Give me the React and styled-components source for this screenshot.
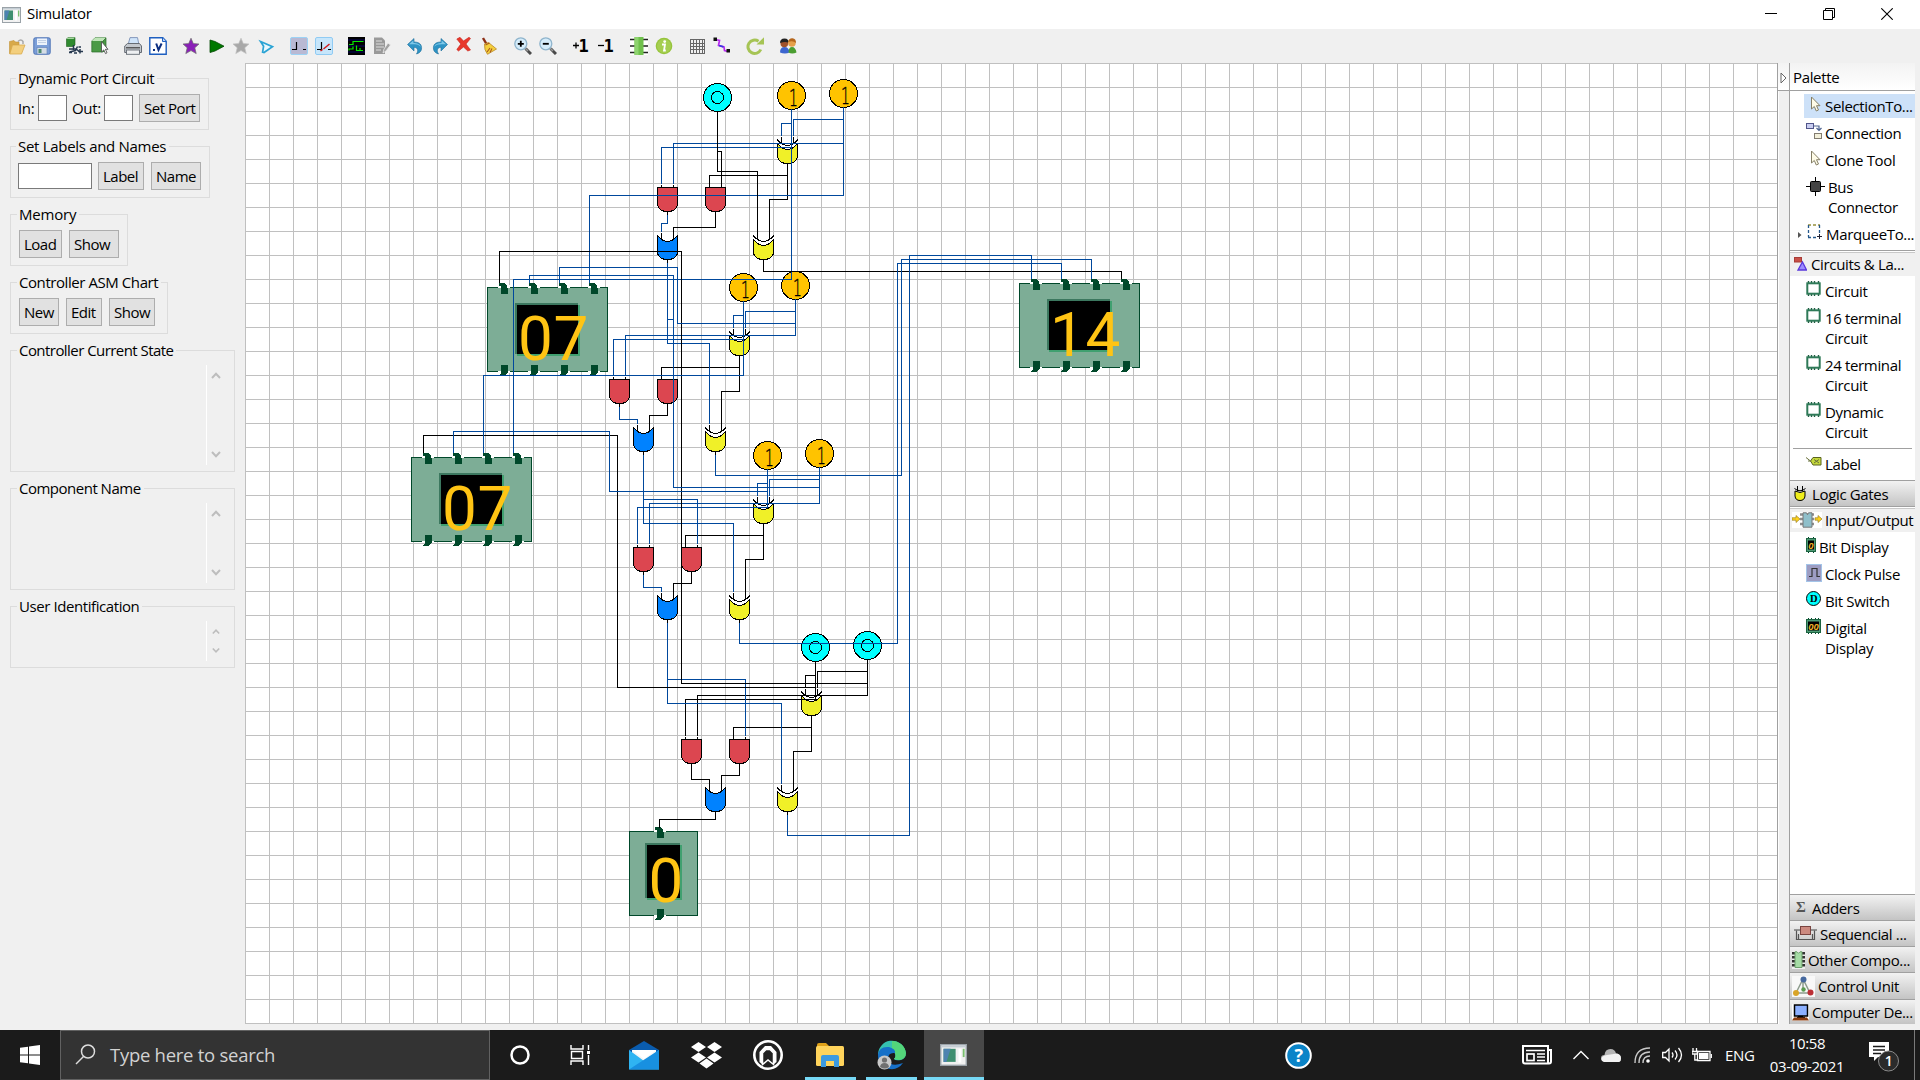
import React from "react";
import styled, { createGlobalStyle, css } from "styled-components";

const Global = createGlobalStyle`
  * { box-sizing: border-box; }
  html, body { margin: 0; padding: 0; overflow: hidden; }
  body {
    width: 1920px; height: 1080px; background: #f0f0f0; color: #000;
    font-family: "Open Sans", "Noto Sans", sans-serif; font-size: 15px; letter-spacing: -0.35px;
  }
  svg { display: block; flex: none; }
`;

const Screen = styled.div`
  width: 1920px; height: 1080px; display: flex; flex-direction: column; overflow: hidden;
`;

/* ---------- title bar ---------- */
const TitleBar = styled.header`
  height: 29px; flex: none; background: #fff; display: flex; align-items: center; padding-left: 2px;
`;
const TitleText = styled.div`
  flex: 1; padding: 0 0 2px 6px; line-height: 27px;
`;
const WindowButtons = styled.div`
  display: flex; gap: 46px; padding: 0 27px 1px 0;
`;

/* ---------- toolbar ---------- */
const ToolBar = styled.div`
  height: 34px; flex: none; display: flex; align-items: center; gap: 15px; padding-left: 8px;
`;
const ToolGroup = styled.div`
  display: flex; gap: 7px;
`;
const ToolButton = styled.div`
  width: 18px; height: 18px;
`;

/* ---------- body ---------- */
const Body = styled.div`
  height: 967px; flex: none; display: flex; padding-bottom: 6px;
`;
const Sidebar = styled.aside`
  width: 245px; flex: none; padding: 5px 0 0 10px; display: flex; flex-direction: column; gap: 6px;
`;
const Group = styled.fieldset`
  width: ${(p) => p.$w}px; height: ${(p) => p.$h || 62}px; min-width: 0; margin: 0;
  border: 1px solid #dcdcdc; padding: ${(p) => p.$pad || "6px 0 0 8px"};
`;
const Legend = styled.legend`
  margin-left: ${(p) => (p.$flush ? 6 : -2)}px; padding: 0 3px 0 2px; height: 20px; line-height: 21px;
  white-space: nowrap; letter-spacing: ${(p) => p.$ls || 0}px;
`;
const Row = styled.div`
  display: flex; align-items: center; height: 28px;
`;
const FieldLabel = styled.span`
  width: ${(p) => p.$w}px; padding-left: ${(p) => p.$pl || 0}px; line-height: 28px;
`;
const Field = styled.div`
  width: ${(p) => p.$w}px; height: 26px; background: #fff; border: 1px solid #7a7a7a;
  margin-right: ${(p) => p.$mr || 0}px;
`;
const Button = styled.div`
  width: ${(p) => p.$w}px; height: 28px; background: #e1e1e1; border: 1px solid #adadad;
  padding-left: 4px; margin-right: ${(p) => p.$mr || 0}px; line-height: 27px; white-space: nowrap;
  letter-spacing: -0.5px;
`;
const ScrollPane = styled.div`
  height: ${(p) => p.$h}px; margin: 5px 9px 0 195px; border-left: 1px solid #fff;
  display: flex; flex-direction: column; justify-content: space-between; align-items: center;
  padding: 7px 0;
`;

/* ---------- canvas ---------- */
const Canvas = styled.main`
  width: 1532px; flex: none; background-color: #fff;
  background-image: linear-gradient(to right, #c0c0c0 1px, transparent 1px),
    linear-gradient(to bottom, #c0c0c0 1px, transparent 1px);
  background-size: 24px 24px;
`;

/* ---------- palette ---------- */
const PaletteWrap = styled.section`
  width: 138px; flex: none; display: flex; flex-direction: column; border-left: 1px solid #a0a0a0;
`;
const PaletteHead = styled.div`
  height: 28px; flex: none; display: flex; border-bottom: 1px solid #a0a0a0;
  background: linear-gradient(#f3f3f3, #fff);
`;
const HeadToggle = styled.div`
  width: 12px; border-right: 1px solid #a0a0a0; padding: 9px 0 0 2px;
`;
const HeadText = styled.div`
  padding-left: 3px; line-height: 29px;
`;
const PaletteMain = styled.div`
  flex: 1; display: flex; min-height: 0;
`;
const Gutter = styled.div`
  width: 12px; flex: none; background: #f0f0f0; border-right: 1px solid #a0a0a0; border-left: 1px solid #fff;
`;
const Drawers = styled.div`
  width: 125px; background: #fff; display: flex; flex-direction: column; padding-top: 2px;
`;
const Tool = styled.div`
  flex: none; min-height: 27px; display: flex; padding: 3px 0 4px ${(p) => (p.$arrow ? 7 : 16)}px;
  line-height: 20px; white-space: pre; letter-spacing: -0.35px;
  ${(p) => p.$selected && css`
    background: linear-gradient(#cde1f8, #cde1f8) 14px 1px / 111px 24px no-repeat;
  `}
`;
const ToolIcon = styled.div`
  width: ${(p) => p.$w || 16}px; margin-right: ${(p) => p.$gap ?? 3}px; flex: none;
  padding-top: ${(p) => p.$top || 0}px;
`;
const OpenHeader = styled.div`
  flex: none; height: 26px; border-top: 1px solid #a0a0a0; background: #f0f0f0; display: flex;
  align-items: center; padding: 1px 0 0 ${(p) => p.$pl}px; margin: ${(p) => p.$m}; gap: ${(p) => p.$gap}px;
  box-shadow: inset 0 1px 0 #fff, inset 0 2px 0 #c8c8c8; white-space: nowrap;
`;
const Rule = styled.div`
  flex: none; height: 1px; background: #a0a0a0; margin: 2px 3px 2px;
`;
const Drawer = styled.div`
  flex: none; height: ${(p) => p.$h || 26}px; border-top: 1px solid #a0a0a0; display: flex; align-items: center;
  background: linear-gradient(#f2f2f2, #c4c4c4); padding-left: ${(p) => p.$pl}px; gap: ${(p) => p.$gap}px;
  white-space: nowrap; margin-top: ${(p) => p.$mt || 0}px;
`;
const Spacer = styled.div`
  flex: 1;
`;

/* ---------- taskbar ---------- */
const Taskbar = styled.footer`
  height: 50px; flex: none; background: #1b1b1b; color: #fff; display: flex;
`;
const StartButton = styled.div`
  width: 60px; display: flex; align-items: center; justify-content: center;
`;
const SearchBox = styled.div`
  width: 430px; background: #333; border: 1px solid #616161; display: flex; align-items: center;
  padding: 0 0 2px 14px; gap: 14px; font-size: 18.5px; color: #d2d2d2; letter-spacing: -0.27px;
`;
const TaskItem = styled.div`
  width: ${(p) => p.$w || 62}px; display: flex; flex-direction: column; align-items: center; justify-content: center;
  background: ${(p) => (p.$active ? "#484848" : "transparent")};
  margin: 0 ${(p) => p.$mr || 0}px 0 ${(p) => p.$ml || 0}px; padding-right: ${(p) => p.$pr || 0}px;
  box-shadow: ${(p) => (p.$open ? "inset 0 -3px 0 #76d9f6" : "none")};
`;
const Help = styled.div`
  width: 27px; margin-left: 301px; display: flex; align-items: center;
`;
const Tray = styled.div`
  margin-left: auto; display: flex; align-items: center;
`;
const TrayItem = styled.div`
  width: ${(p) => p.$w}px; margin-right: ${(p) => p.$mr}px; padding-top: ${(p) => p.$pt || 0}px;
`;
const Clock = styled.div`
  width: 80px; margin-right: 22px; text-align: center; line-height: 23px; letter-spacing: -0.4px;
`;
const ShowDesktop = styled.div`
  width: 6px; height: 50px; border-left: 1px solid #7a7a7a;
`;

/* ---------- toolbar icons ---------- */
const I = ({ children, w = 18, h = 18, vb }) => (
  <svg width={w} height={h} viewBox={vb || `0 0 ${w} ${h}`}>{children}</svg>
);

const Star = ({ a, b }) => (
  <I><path d="M9 1.2 11.3 6.6 17 7 12.8 10.8 14.2 16.6 9 13.6 3.8 16.6 5.2 10.8 1 7 6.7 6.6Z" fill={a} stroke={b} strokeWidth=".7" /></I>
);
const Lens = ({ plus }) => (
  <I>
    <path d="M11.5 11.5 17 17" stroke="#4a4a4a" strokeWidth="3" />
    <path d="M11.5 11.5 14 14" stroke="#999" strokeWidth="1.5" />
    <circle cx="6.8" cy="6.8" r="6" fill="#d5ecfa" stroke="#8fb4cc" strokeWidth="1.3" />
    <path d={plus ? "M3.8 6.8h6M6.8 3.8v6" : "M3.8 6.8h6"} stroke="#000" strokeWidth="1.8" />
  </I>
);
const Turn = ({ flip }) => (
  <I>
    <g transform={flip ? "translate(18 0) scale(-1 1)" : undefined}>
      <path d="M1.500 7.500 8 1.500V5C14 5 16 8 15.500 12 15.200 14.500 13.500 16 10.500 17 12.500 14 12 10.500 8 10.300V14Z" fill="#2d93c4" stroke="#1b6d9b" strokeWidth=".6" />
      <path d="M3 7.300 7.400 3.500V6C11 6 14 7 15 10 13 7.500 10 7 3 7.300Z" fill="#7fc8e8" />
    </g>
  </I>
);
const StepOne = ({ sign }) => (
  <svg width="18" height="18" viewBox="0 0 18 18">
    <path d={sign === "+" ? "M1 8.500h6M4 5.500v6" : "M1 8.500h6"} stroke="#000" strokeWidth="1.300" />
    <text x="6.400" y="15" fontFamily="DejaVu Sans Mono" fontSize="17" fontWeight="700">1</text>
  </svg>
);

const OpenIcon = () => (
  <I>
    <path d="M1.500 4.500 6 3.500 7.500 5H11V8H5L2.500 16.500H1.500Z" fill="#d8a949" stroke="#c39235" strokeWidth=".6" />
    <path d="M4.500 8H17L13.500 17H1.800Z" fill="#f3cf7e" stroke="#d9ab4d" strokeWidth=".8" />
    <path d="M10 4.500Q13 1.500 15 4.500V7" fill="none" stroke="#a9a9a9" strokeWidth="1.500" />
  </I>
);
const SaveIcon = () => (
  <I>
    <rect x=".8" y=".8" width="16.400" height="16.400" rx="1.500" fill="#7c9fd8" stroke="#4d73b5" />
    <rect x="4" y="1.500" width="10" height="6.500" fill="#edf3fb" />
    <path d="M5 3.500h8M5 5.500h8" stroke="#b8c8e0" strokeWidth=".8" />
    <rect x="4" y="10.500" width="10" height="6.500" fill="#d5dde6" stroke="#5f80b8" strokeWidth=".6" />
    <rect x="5.500" y="12" width="3" height="4" fill="#4d8a6d" />
  </I>
);
const RouteIcon = () => (
  <I>
    <path d="M.5 2 2 .5h7V8L7.500 9.500H.5Z" fill="#2f8a2f" stroke="#1d5c1d" strokeWidth=".6" />
    <path d="M.5 2 2 .5h7L7.500 2Z" fill="#a6d6a0" />
    <path d="M7.500 8v5M3 12h8M11.500 9.500l-2 4-6 1.500M8 16h3M11 12.500l2 2h4M14 12v4.500M12.500 10h2.500M3 15.500h3" fill="none" stroke="#26384f" strokeWidth="1.500" />
  </I>
);
const BlockCursorIcon = () => (
  <I>
    <path d="M.8 4 4 .8h11V12l-3 3H.8Z" fill="#4a9a45" stroke="#2a6a28" strokeWidth=".7" />
    <path d="M.8 4 4 .8h11L12 4Z" fill="#bfe5b8" />
    <path d="M12 4v11M12 4l3-3" stroke="#2a6a28" strokeWidth=".7" />
    <path d="M10.500 4.500V15l2.300-2.100 1.700 3.700 1.500-.8-1.600-3.500H17Z" fill="#fff" stroke="#555" strokeWidth=".9" />
  </I>
);
const PrintIcon = () => (
  <I>
    <path d="M4 8 6 .6h7.500L15 8Z" fill="#cfe4fa" stroke="#7c90b5" strokeWidth=".9" />
    <path d="M.7 9 3.500 6.500h12L17.500 9v6.500H.7Z" fill="#c3c8ce" stroke="#666c74" strokeWidth="1" />
    <rect x="2.500" y="13" width="13" height="4.300" fill="#eef0f2" stroke="#666c74" strokeWidth=".9" />
    <path d="M2 10.800h14" stroke="#333" strokeWidth="1.100" />
  </I>
);
const VerilogIcon = () => (
  <I>
    <path d="M.8.8h13l3.400 3.400v13H.8Z" fill="#fff" stroke="#1e5fc0" strokeWidth="1.400" />
    <path d="M13.500.8v3.700h3.700" fill="#bcd4f7" stroke="#1e5fc0" />
    <path d="M4 13h2M7.200 6.500 9.500 13 12.600 6.500" fill="none" stroke="#0b2e80" strokeWidth="2" />
  </I>
);

const GROUPS = [
  [<OpenIcon />, <SaveIcon />],
  [<RouteIcon />, <BlockCursorIcon />],
  [<PrintIcon />, <VerilogIcon />],
  [
    <Star a="#8a1fb8" b="#6d6d6d" />,
    <I><path d="M3 3 8 4.500 17 9.200 8 14 3 15.500Z" fill="#007800" stroke="#044a04" strokeWidth=".8" /></I>,
    <Star a="#a8a8a8" b="#c2c2c2" />,
    <I><path d="M3.600 4.500 15.500 9.600 7 15.500 5.600 15.200 6.600 9.200Z" fill="#e9f7fd" stroke="#2aa3d4" strokeWidth="1.700" /></I>,
  ],
  [
    <I><rect x=".5" y=".5" width="17" height="17" rx="1.500" fill="#b9b9d3" stroke="#9cd2f5" /><path d="M2 12.500h4.500V5M13 12.500h3" fill="none" stroke="#000" strokeWidth="1.200" /></I>,
    <I><rect x=".5" y=".5" width="17" height="17" rx="1.500" fill="#c7e6fb" stroke="#90cbf3" /><path d="M2 12.500h4.500V5M13 12.500h3" fill="none" stroke="#000" strokeWidth="1.200" /><path d="m5.500 14 2-1.500M8.500 12l6-5" stroke="#d51c1c" strokeWidth="1.500" /></I>,
  ],
  [
    <I><rect width="17" height="18" fill="#000" /><path d="M0 3h17M0 9h17M0 15h17" stroke="#050560" strokeWidth="1" /><path d="M1 7.500h4V4.500h10.500M1 13.500V12h4V9.500M8.500 8.500v5h3M12 11v2.500h3" fill="none" stroke="#08e800" strokeWidth="1.200" /></I>,
    <I><path d="M1 .5h8l3 3V17H1Z" fill="#999" /><path d="M3 4h6M3 7h8M3 10h8M3 13h5" stroke="#dedede" strokeWidth="1.200" /><path d="m10 16 1-4 4-6 2.500 2-4.500 6Z" fill="#a2a2a2" stroke="#eee" strokeWidth=".8" /></I>,
  ],
  [
    <Turn />,
    <Turn flip />,
    <I><path d="M.8 2 4 .3 7.500 4 13 .3 14.500 1.500 10 7 14.500 13 11.800 14 7.500 10 2.500 14 .8 12.500 4.800 7Z" fill="#e8382c" stroke="#c7221a" strokeWidth=".6" /></I>,
    <I><path d="m2 1 3.500 6" stroke="#8c2f16" strokeWidth="2.400" /><path d="M3.500 7 7.500 5.500 15.500 12 6.500 17.300Q3 13 3.500 7Z" fill="#f4cf3c" stroke="#b9882a" strokeWidth=".8" /><path d="m4.500 8 4-2M6 15l3-4M9 15.500l2-4" stroke="#a8571c" strokeWidth="1.100" /></I>,
  ],
  [<Lens plus />, <Lens />],
  [<StepOne sign="+" />, <StepOne sign="-" />],
  [
    <I><rect width="18" height="18" fill="#fff" /><path d="M0 2.500h18M0 9h18M0 15.500h18" stroke="#222" strokeWidth="1.300" /><rect x="4.500" width="9" height="18" fill="#6fc04c" /><rect x="4.500" width="4" height="18" fill="#8ed36f" /></I>,
    <I><circle cx="9" cy="9" r="8.300" fill="#96c43c" /><circle cx="9" cy="9" r="7" fill="#a5ce50" /><circle cx="9.700" cy="4.600" r="1.400" fill="#fff" /><path d="M7 7.500h3L9 13.500h1.800" fill="none" stroke="#fff" strokeWidth="1.800" /></I>,
  ],
  [
    <I><path d="M2.500 2v15M5.500 2v15M8.500 2v15M11.500 2v15M14.500 2v15M16.500 2v15M2 2.500h15M2 6.500h15M2 9.500h15M2 12.500h15M2 16.500h15" stroke="#666" shapeRendering="crispEdges" /></I>,
    <I><path d="M2 2.500 6.500 3.500 5.500 8.500 11 10 11.500 13.500 15 14.500" fill="none" stroke="#b92bee" strokeWidth="1.700" /><path d="M6 8.500 10.500 9.800" stroke="#3b35e0" strokeWidth="1.800" /><rect x=".5" y=".5" width="3.500" height="3.500" fill="#111" /><rect x="13.500" y="12" width="3.500" height="3.500" fill="#111" /></I>,
  ],
  [<I><path d="M14.800 12.500A6.700 6.700 0 1 1 12.500 4.200" fill="none" stroke="#a6c455" strokeWidth="3" /><path d="M10.500 7.500h7.500V.3Z" fill="#a6c455" /></I>],
  [
    <I>
      <path d="M1 15.500Q1 10 5.500 10t5 5.500Q6 17.500 1 15.500" fill="#3d66d0" /><circle cx="5.300" cy="6.500" r="3.800" fill="#a0512a" /><path d="M1 6Q1 1.500 5.500 1.500T9.500 6Q7 4 1 6" fill="#222" />
      <path d="M9.500 15.500Q9.500 10 13 10t4.500 5.500Q13 17.300 9.500 15.500" fill="#4b9e31" /><circle cx="12.900" cy="6" r="3.800" fill="#e6a04a" /><path d="M9 5Q10 1 13.500 1.300T17 6Q14 3 9 5" fill="#b5661c" />
    </I>,
  ],
];

/* ---------- circuit ---------- */
const BLUE = "#00489c";
const BLACK = "#000";

const Gate = ({ type, x, y }) => (
  <g transform={`translate(${x} ${y})`} stroke="#000" strokeWidth="1">
    {type === "and" && (
      <>
        <path d="M-6 -3V0M6 -3V0M0 24V28" />
        <path d="M-10 0H10V17Q9 24 0 24T-10 17Z" fill="#dc4650" />
      </>
    )}
    {type === "or" && (
      <>
        <path d="M-10 0Q-5 6 0 6T10 0V17Q9 24 0 24T-10 17Z" fill="#0082ff" />
        <path d="M-6 -3V4M6 -3V4M0 24V27" />
      </>
    )}
    {type === "xor" && (
      <>
        <path d="M-10 0Q-5 6 0 6T10 0V5H-10Z" fill="#fff" stroke="none" />
        <path d="M-10 4Q-5 10 0 10T10 4V17Q9 24 0 24T-10 17Z" fill="#f0f028" />
        <path d="M-10.500 0Q-5 6 0 6T10.500 0" fill="none" />
        <path d="M-6 -3V4M6 -3V4M0 24V27" />
      </>
    )}
  </g>
);

const Switch = ({ x, y, on }) => (
  <g transform={`translate(${x} ${y})`}>
    <circle r="14" fill={on ? "#ffc300" : "#00ffff"} stroke="#000" />
    {on ? (
      <text transform="translate(-2.500 10) scale(.62 1)" fontFamily="DejaVu Sans" fontWeight="200" fontSize="22.500" stroke="#000" strokeWidth=".4">1</text>
    ) : (
      <circle r="6" fill="none" stroke="#000" />
    )}
  </g>
);

const Pin = ({ x, top, bottom }) => (
  <g>
    <rect x={x - 1} y={top - 2} width="12" height="4" fill="#fff" />
    <rect x={x - 1} y={bottom - 2} width="12" height="4" fill="#fff" />
    <path d={`M${x} ${top - 4}h5l3 3v8h-6v-8h-2z`} fill="#00482a" />
    <rect x={x + 2} y={top + 1} width="7" height="6" fill="#00482a" />
    <path d={`M${x + 2} ${bottom - 6}h7v7l-3 4h-6v-1l2 -2z`} fill="#00482a" />
  </g>
);

const Display = ({ x, y, w, value, pins, screen, text }) => (
  <g>
    <rect x={x + 0.5} y={y + 0.5} width={w - 1} height="84" fill="#7dad96" stroke="#00482a" />
    {pins.map((p) => (
      <g key={p}>
        <Pin x={x + p} top={y} bottom={y + 84} />
        <rect x={x + p - 1} y={y + 1} width="3" height="2" fill="#7dad96" />
        <rect x={x + p + 9} y={y + 1} width="2" height="2" fill="#7dad96" />
        <rect x={x + p - 1} y={y + 81} width="3" height="3" fill="#7dad96" />
        <rect x={x + p + 9} y={y + 81} width="2" height="3" fill="#7dad96" />
      </g>
    ))}
    <rect x={x + screen[0] - 2} y={y + screen[1] - 2} width={screen[2] + 2} height={screen[3] + 2} fill="#3c785f" />
    <rect x={x + screen[0]} y={y + screen[1]} width={screen[2] + 2} height={screen[3] + 2} fill="#40a070" />
    <rect x={x + screen[0]} y={y + screen[1]} width={screen[2]} height={screen[3]} fill="#000" />
    <text x={x + text[0]} y={y + text[1]} fontFamily="Roboto, sans-serif" fontSize="62" letterSpacing=".7" fill="#ffc414">{value}</text>
  </g>
);

const STAGES = [
  { dx: 0, dy: 0, or: 667.5, on: true },
  { dx: -48, dy: 192, or: 643.5, on: true },
  { dx: -24, dy: 360, or: 667.5, on: true },
  { dx: 24, dy: 552, or: 715.5, on: false },
];

const stageWires = ({ dx, dy, on }) => {
  const c = on ? BLUE : BLACK;
  return [
    [c, `M${791.5 + dx} ${109 + dy}V${147.5 + dy}H${661.5 + dx}V${184 + dy}`],
    [c, `M${791.5 + dx} ${123.5 + dy}H${781.5 + dx}V${136 + dy}`],
    [c, `M${843.5 + dx} ${107 + dy}V${143.5 + dy}H${673.5 + dx}V${184 + dy}`],
    [c, `M${843.5 + dx} ${119.5 + dy}H${793.5 + dx}V${136 + dy}`],
    [BLACK, `M${787.5 + dx} ${164 + dy}V${199.5 + dy}H${769.5 + dx}V${239 + dy}`],
    [BLACK, `M${787.5 + dx} ${175.5 + dy}H${709.5 + dx}V${187 + dy}`],
  ];
};

const WIRES = [
  ...STAGES.flatMap(stageWires),
  [BLUE, "M791.5 147V279.5H513.5V453"],
  [BLUE, "M843.5 143V195.5H589.5V283"],
  [BLACK, "M717.5 111V171.5H757.5V238"],
  [BLACK, "M717.5 151.5H721.5V187"],
  [BLUE, "M667.5 215V223.5H661.5V232"],
  [BLACK, "M715.5 212V227.5H673.5V239"],
  [BLUE, "M619.5 407V419.5H637.5V424"],
  [BLACK, "M667.5 404V415.5H649.5V431"],
  [BLUE, "M643.5 575V587.5H661.5V592"],
  [BLACK, "M691.5 572V583.5H673.5V599"],
  [BLACK, "M691.5 764V779.5H709.5V790"],
  [BLACK, "M739.5 764V775.5H721.5V790"],
  [BLUE, "M667.5 263V343.5H709.5V424"],
  [BLUE, "M667.5 319.5H673.5"],
  [BLUE, "M643.5 455V523.5H733.5V592"],
  [BLUE, "M643.5 499.5H697.5V544"],
  [BLUE, "M667.5 623V703.5H781.5V784"],
  [BLUE, "M667.5 679.5H745.5V736"],
  [BLACK, "M715.5 812V819.5H659.5V828"],
  [BLACK, "M499.5 283V251.5H681.5V683.5H867.5"],
  [BLUE, "M529.5 283V275.5H673.5V487.5H819.5"],
  [BLUE, "M559.5 283V267.5H677.5V323.5H795.5"],
  [BLACK, "M423.5 453V435.5H617.5V687.5H815.5"],
  [BLUE, "M453.5 453V431.5H609.5V491.5H767.5"],
  [BLUE, "M483.5 453V375.5H743.5V339"],
  [BLACK, "M763.5 260V271.5H1121.5V279"],
  [BLUE, "M715.5 455V475.5H901.5V259.5H1091.5V279"],
  [BLUE, "M739.5 623V643.5H897.5V263.5H1061.5V279"],
  [BLUE, "M787.5 815V835.5H909.5V255.5H1031.5V279"],
];

const WIDE = { w: 121, pins: [12, 42, 72, 102], screen: [30, 18, 61, 49], text: [31, 73] };

const Circuit = () => (
  <svg width="1532" height="961" viewBox="245 63 1532 961" shapeRendering="crispEdges" letterSpacing="0">
    {STAGES.map(({ dx, dy, or, on }) => (
      <g key={dy}>
        <Switch x={791.5 + dx} y={95.5 + dy} on={on} />
        <Switch x={843.5 + dx} y={93.5 + dy} on={on} />
        <Gate type="xor" x={787.5 + dx} y={139.5 + dy} />
        <Gate type="and" x={667.5 + dx} y={187.5 + dy} />
        <Gate type="and" x={715.5 + dx} y={187.5 + dy} />
        <Gate type="or" x={or} y={235.5 + dy} />
        <Gate type="xor" x={763.5 + dx} y={235.5 + dy} />
      </g>
    ))}
    <Switch x={717.5} y={97.5} />
    <Display x={487} y={287} value="07" {...WIDE} />
    <Display x={411} y={457} value="07" {...WIDE} />
    <Display x={1019} y={283} value="14" {...WIDE} />
    <Display x={629} y={831} w={69} value="0" pins={[26]} screen={[18, 14, 33, 53]} text={[19.5, 71]} />
    <g fill="none" strokeWidth="1">
      {WIRES.map(([c, d], i) => <path key={i} d={d} stroke={c} />)}
    </g>
  </svg>
);

/* ---------- palette icons ---------- */
const Cursor = () => (
  <I w={16} h={16}><path d="M5.500 1v12l2.800-2.500 2 4.500 2.200-1-2-4.300H14Z" fill="#fffce8" stroke="#857f66" /></I>
);
const Chip = () => (
  <I w={15} h={15}>
    <path d="M2.500 0v15M5.500 0v15M8.500 0v15M12.500 0v15" stroke="#1e5c40" strokeWidth="1.400" />
    <rect x="1.300" y="2.300" width="12.400" height="10.400" fill="#fff" stroke="#2f7a58" strokeWidth="2" />
  </I>
);
const Led = ({ w, value }) => (
  <svg width={w} height="16" viewBox={`0 0 ${w} 16`} letterSpacing="0">
    <path d={w > 12 ? "M2.500 0v16M5.500 0v16M9.500 0v16M12.500 0v16" : "M2.500 0v16M7.500 0v16"} stroke="#004b2c" />
    <rect x=".5" y="1.500" width={w - 1} height="13" fill="#4d9a74" stroke="#1d6442" />
    <rect x="2" y="3.500" width={w - 4} height="9" fill="#000" />
    <text x={w / 2} y="11.600" textAnchor="middle" fontFamily="Liberation Sans" fontStyle="italic" fontWeight="700" fontSize="9.500" fill="#f0b428">{value}</text>
  </svg>
);
const ScrollArrow = ({ down, small }) => (
  <svg width={small ? 8 : 10} height="7" viewBox="0 0 10 7">
    <path d={down ? "M1 1 5 5.200 9 1" : "M1 6 5 1.800 9 6"} fill="none" stroke="#bdbdbd" strokeWidth="2" />
  </svg>
);

const Palette = () => (
  <PaletteWrap>
    <PaletteHead>
      <HeadToggle><I w={7} h={12}><path d="M1 1v10l5-5Z" fill="#fff" stroke="#666" /></I></HeadToggle>
      <HeadText>Palette</HeadText>
    </PaletteHead>
    <PaletteMain>
      <Gutter />
      <Drawers>
        <Tool $selected><ToolIcon><Cursor /></ToolIcon>SelectionTo...</Tool>
        <Tool>
          <ToolIcon>
            <I w={16} h={16}>
              <rect x=".5" y=".5" width="7" height="5" fill="#c9cdf0" stroke="#50558a" />
              <path d="M8 3h5v4M10.500 5 13 7.500 15.500 5" fill="none" stroke="#4c6290" strokeWidth="1.200" />
              <rect x="8.500" y="10.500" width="7" height="5" fill="#f2efda" stroke="#827c70" />
            </I>
          </ToolIcon>
          Connection
        </Tool>
        <Tool><ToolIcon><Cursor /></ToolIcon>Clone Tool</Tool>
        <Tool>
          <ToolIcon $w={19}>
            <I w={19} h={20} vb="0 1 19 20"><path d="M9.500 0v20M0 10.500h19" stroke="#000" /><rect x="4.500" y="5.500" width="10" height="10" rx="1" fill="#444" stroke="#000" /></I>
          </ToolIcon>
          {"Bus\nConnector"}
        </Tool>
        <Tool $arrow>
          <ToolIcon $w={5} $gap={4} $top={7}><I w={5} h={8}><path d="M1 1v6l3.500-3Z" fill="#555" /></I></ToolIcon>
          <ToolIcon $w={16} $gap={4}>
            <I w={16} h={15} vb="-1 0 16 15">
              <path d="M1 1h12" stroke="#96903c" strokeDasharray="3 2" strokeWidth="1.500" />
              <path d="M1.500 1v12M12.500 1v9M1 13.500h9" fill="none" stroke="#25588c" strokeDasharray="3 2" strokeWidth="1.300" />
              <path d="M12.500 10v5M10 12.500h5" stroke="#223" />
            </I>
          </ToolIcon>
          MarqueeTo...
        </Tool>
        <OpenHeader $pl={4} $gap={4} $m="2px 0 2px">
          <I w={13} h={14}><rect x=".5" y=".5" width="7" height="4.500" fill="#c85048" stroke="#a83c36" /><path d="M8.500 5 12.500 13h-8.500Z" fill="#9c8cff" stroke="#5a38dc" strokeWidth="1.300" /></I>
          Circuits &amp; La...
        </OpenHeader>
        <Tool><ToolIcon><Chip /></ToolIcon>Circuit</Tool>
        <Tool><ToolIcon><Chip /></ToolIcon>{"16 terminal\nCircuit"}</Tool>
        <Tool><ToolIcon><Chip /></ToolIcon>{"24 terminal\nCircuit"}</Tool>
        <Tool><ToolIcon><Chip /></ToolIcon>{"Dynamic\nCircuit"}</Tool>
        <Rule />
        <Tool>
          <ToolIcon $top={2}>
            <I w={16} h={10}><path d="M4.500 5 7 1.500h8V9H7Z" fill="#c5d83c" stroke="#5a6420" /><path d="M0 1.500 4.500 5H2M8 3.500l5 3.500M13 3.500 8 7" fill="none" stroke="#67703a" /></I>
          </ToolIcon>
          Label
        </Tool>
        <Drawer $pl={4} $gap={6} $mt={2}>
          <I w={12} h={16}><path d="M1 5Q6 8 11 5V10Q10.500 14.500 6 14.500T1 10Z" fill="#f0ee1c" stroke="#000" /><path d="M.5 2.500Q6 7 11.500 2.500M3.500 0v5M8.500 0v5" fill="none" stroke="#000" /></I>
          Logic Gates
        </Drawer>
        <OpenHeader $pl={2} $gap={3} $m="0 0 2px">
          <I w={30} h={16}>
            <rect width="30" height="16" fill="#fff" />
            <path d="M8 2.500h14M8 7h14M8 12h14" stroke="#8d8d8d" strokeWidth="2.500" />
            <path d="M11 .8h3.500l1 2 1-2H20V15.200H11Z" fill="#8fbfca" stroke="#777" />
            <path d="M0 5.800h4V3.500L8 7 4 10.500V8.200H0ZM23 5.800h3V3.500L30 7 26 10.500V8.200h-3Z" fill="#ffd21c" stroke="#9a8128" strokeWidth=".7" />
          </I>
          Input/Output
        </OpenHeader>
        <Tool><ToolIcon $w={10}><Led w={10} value="0" /></ToolIcon>Bit Display</Tool>
        <Tool>
          <ToolIcon><I w={16} h={18}><rect x=".5" y=".5" width="15" height="17" fill="#9c9cc2" stroke="#a3c4e8" /><path d="M3 12.500h3v-8h5v8h3" fill="none" stroke="#333" strokeWidth="1.200" /></I></ToolIcon>
          Clock Pulse
        </Tool>
        <Tool>
          <ToolIcon>
            <svg width="15" height="15" viewBox="0 0 15 15"><circle cx="7.500" cy="7.500" r="7" fill="#0ff" stroke="#000" /><text x="7.700" y="11" textAnchor="middle" fontFamily="Liberation Serif" fontWeight="700" fontSize="10.500">D</text></svg>
          </ToolIcon>
          Bit Switch
        </Tool>
        <Tool><ToolIcon><Led w={15} value="00" /></ToolIcon>{"Digital\nDisplay"}</Tool>
        <Spacer />
        <Drawer $pl={6} $gap={6}>
          <svg width="10" height="20" viewBox="0 0 10 20"><text x="0" y="14" fontFamily="Liberation Serif" fontWeight="700" fontSize="15" fill="#555">Σ</text></svg>
          Adders
        </Drawer>
        <Drawer $pl={4} $gap={3}>
          <I w={23} h={15}><path d="M0 4h23" stroke="#444" /><path d="M2.500 4.500v9h18v-9M4.500 8v5M18.500 8v5" fill="none" stroke="#555" strokeWidth="1.200" /><rect x="6.500" y=".5" width="10" height="8" fill="#cc8a80" stroke="#7a4440" /></I>
          Sequencial ...
        </Drawer>
        <Drawer $pl={2} $gap={3}>
          <I w={13} h={18}><rect width="13" height="18" fill="#eee" /><path d="M1.500 1v16M11.500 1v16" stroke="#333" strokeWidth="3" strokeDasharray="2.500 1.500" /><path d="M3 .8h2l1.500 1.500L8 .8h2V16.500H3Z" fill="#a5dca5" stroke="#6da06d" /></I>
          Other Compo...
        </Drawer>
        <Drawer $h={27} $pl={2} $gap={3}>
          <I w={23} h={21}><rect width="23" height="21" fill="#f8f8f8" /><path d="M11 3 4 17H18ZM11 3v10" fill="none" stroke="#8d9c8d" strokeWidth="1.500" /><circle cx="11.500" cy="3.500" r="3" fill="#46699f" /><circle cx="4" cy="17" r="3" fill="#d9a428" /><circle cx="18.500" cy="16.500" r="3" fill="#bb2f35" /><circle cx="11.500" cy="13.500" r="2.200" fill="#5b9c50" /></I>
          Control Unit
        </Drawer>
        <Drawer $h={25} $pl={2} $gap={3}>
          <I w={17} h={17}><rect width="17" height="17" fill="#fff" /><rect x="2.500" y="1" width="13" height="11" fill="#8cb0ff" stroke="#000" strokeWidth="1.500" /><path d="M6 12.500h5M5 13.500h8" stroke="#000" strokeWidth="1.500" /><path d="M0 16.500 2 13.500H15L17 16.500Z" fill="#8a3c10" /></I>
          Computer De...
        </Drawer>
      </Drawers>
    </PaletteMain>
  </PaletteWrap>
);

/* ---------- taskbar parts ---------- */
const AppIcon = ({ w, h }) => (
  <svg width={w} height={h} viewBox="0 0 19 16" preserveAspectRatio="none">
    <rect x=".5" y=".5" width="18" height="15" fill="#f1f1f1" stroke="#9aa2a8" />
    <rect x="1" y="1" width="17" height="1.500" fill="#c4cdd4" />
    <rect x="2.500" y="3.500" width="8.500" height="9.500" fill="#3f8f70" />
    <path d="M2.500 3.500h5l-3 9.500h-2Z" fill="#4d83b0" />
    <rect x="13" y="3.500" width="2" height="10" fill="#fff" />
    <rect x="16" y="3.500" width="1.300" height="6" fill="#7ac06f" />
  </svg>
);

const TaskbarView = () => (
  <Taskbar>
    <StartButton>
      <I w={20} h={20}><path d="M0 2.800 8 1.700V9.500H0ZM9 1.500 20 0V9.500H9ZM0 10.500H8V18.300L0 17.200ZM9 10.500H20V20L9 18.500Z" fill="#fff" /></I>
    </StartButton>
    <SearchBox>
      <I w={21} h={21}><circle cx="13" cy="7.500" r="6.500" fill="none" stroke="#ddd" strokeWidth="1.500" /><path d="M8.500 12.500 1 20" stroke="#ddd" strokeWidth="1.500" /></I>
      Type here to search
    </SearchBox>
    <TaskItem $w={60}><I w={20} h={20}><circle cx="10" cy="10" r="8.500" fill="none" stroke="#fff" strokeWidth="2.500" /></I></TaskItem>
    <TaskItem $w={60}>
      <I w={21} h={20}><path d="M1 0v4h12V0M1 20v-4h12v4M1.500 6.500h11v7h-11ZM18.500 0v5M18.500 10v10" fill="none" stroke="#fff" strokeWidth="1.400" /><rect x="17" y="6" width="3" height="3" fill="#fff" /></I>
    </TaskItem>
    <TaskItem $w={68}>
      <I w={30} h={29}><path d="M0 9 15 0 30 9V12H0Z" fill="#0a5cae" /><path d="M3 9H27V18L15 22 3 18Z" fill="#f6f6f6" /><path d="M0 9 15 20 30 9V28.500H0Z" fill="#2fb4f2" /><path d="M0 28.500 30 9V28.500Z" fill="#1890e0" /><path d="M3 9H27L15 18Z" fill="#fff" /></I>
    </TaskItem>
    <TaskItem $w={56}>
      <I w={31} h={27}><path d="M7.500 0 15 5 7.500 10 0 5ZM23.500 0 31 5 23.500 10 16 5ZM7.500 10.500 15 15.500 7.500 20.500 0 15.500ZM23.500 10.500 31 15.500 23.500 20.500 16 15.500ZM15.500 16.500 22.500 21.500 15.500 26.500 8.500 21.500Z" fill="#fff" /></I>
    </TaskItem>
    <TaskItem $w={68}>
      <I w={30} h={30}><circle cx="15" cy="15" r="13.700" fill="#222" stroke="#fff" strokeWidth="2.600" /><path d="M6.500 22V12L12 6H18L23.500 12V22L20.500 24.500V13L17 9.500H13L9.500 13V24.500Z" fill="#fff" /><path d="M9.500 24.500V13L13 9.500h4l3.500 3.500v11.500L15 20Z" fill="#222" stroke="#fff" strokeWidth="1.500" /></I>
    </TaskItem>
    <TaskItem $w={51} $open $ml={3} $mr={10} $pr={2}>
      <I w={28} h={24}><path d="M1 2Q1 0 3 0H10L13 3V8H1Z" fill="#e0a21a" /><rect x="0" y="3" width="28" height="20" rx="1.500" fill="#ffd45c" /><path d="M5 24V14Q5 12 7 12H21Q23 12 23 14V24H18V18H10V24Z" fill="#3c9ae0" /></I>
    </TaskItem>
    <TaskItem $w={51} $open $mr={7}>
      <I w={30} h={30}>
        <path d="M1 15A14 14 0 0 1 28.500 11Q30 18 24 20 18 21 17 19 20 16 17 12 9 8 1 15Z" fill="#35c1b0" />
        <path d="M15 1A14 14 0 0 1 29 13Q29 19 22 20L17 19Q21 14 15 10Z" fill="#53d67a" />
        <path d="M1 15Q2 6 12 7 19 9 18 13 11 12 11 19 13 28 26 23 21 30 13 29 1 27 1 15Z" fill="#1670c8" />
        <circle cx="7.500" cy="22.500" r="7" fill="#c9c9c9" /><circle cx="7.500" cy="20" r="2.600" fill="#707070" /><path d="M3 27Q3.500 23 7.500 23T12 27Q8 30 3 27" fill="#707070" />
      </I>
    </TaskItem>
    <TaskItem $w={60} $open $active $pr={2}><AppIcon w={27} h={22} /></TaskItem>
    <Help>
      <svg width="27" height="27" viewBox="0 0 27 27"><circle cx="13.500" cy="13.500" r="12.300" fill="#0a84c8" stroke="#fff" strokeWidth="2" /><text x="13.500" y="20" textAnchor="middle" fontFamily="Open Sans" fontWeight="700" fontSize="18" fill="#fff">?</text></svg>
    </Help>
    <Tray>
      <TrayItem $w={30} $mr={21}><I w={30} h={20}><path d="M1 1h25v17.500H3Q1 18.500 1 16.500ZM26 5h3v11.500q0 2-2 2H24" fill="none" stroke="#fff" strokeWidth="2" /><path d="M4 5.500h19M15 9h8M15 12h8M15 15.500h8" stroke="#fff" strokeWidth="1.400" /><rect x="5" y="9" width="7" height="6.500" fill="none" stroke="#fff" strokeWidth="1.700" /></I></TrayItem>
      <TrayItem $w={16} $mr={12}><I w={16} h={10}><path d="M.5 9 8 1.500 15.500 9" fill="none" stroke="#fff" strokeWidth="1.400" /></I></TrayItem>
      <TrayItem $w={20} $mr={13}><I w={20} h={13}><path d="M3 12.500Q0 12 0 9T3.500 6Q4 0 9.500 0 14 0 15 4.500 20 5 20 9T17 12.500Z" fill="#b4b4b4" /><path d="M3 13Q0 12.500.5 9.500T6 6L16 4.500Q20 5.500 20 9.500T17 13Z" fill="#f2f2f2" /></I></TrayItem>
      <TrayItem $w={16} $mr={12}><I w={16} h={16}><path d="M1 16Q1 1 16 1M5 16Q5 5 16 5M9 16Q9 9 16 9" fill="none" stroke="#c9c9c9" strokeWidth="1.400" /><circle cx="14" cy="14" r="1.800" fill="#fff" /></I></TrayItem>
      <TrayItem $w={21} $mr={9}><I w={21} h={16}><path d="M.7 5.500H3.500L7 2V14L3.500 10.500H.7Z" fill="none" stroke="#fff" strokeWidth="1.300" /><path d="M10 5.500q2 2.500 0 5M13 3.500q4 4.500 0 9M16.500 1q6 7 0 14" fill="none" stroke="#fff" strokeWidth="1.300" /></I></TrayItem>
      <TrayItem $w={20} $mr={13}><I w={20} h={14}><path d="M5.500 3.500H18v9H5.500Z" fill="none" stroke="#fff" strokeWidth="1.300" /><rect x="7" y="5" width="9.500" height="6" fill="#fff" /><path d="M19.300 6v4M1 0v3M4.500 0v3M0 3.500h5.500V6H0ZM2.800 6v6H5" stroke="#fff" strokeWidth="1.300" fill="none" /></I></TrayItem>
      <TrayItem $w={29} $mr={13}>ENG</TrayItem>
      <Clock>10:58<br />03-09-2021</Clock>
      <TrayItem $w={31} $mr={14} $pt={3}>
        <svg width="31" height="32" viewBox="0 0 31 32">
          <path d="M0 1H20V16H9L5 20V16H0Z" fill="#fff" /><path d="M4 5.500h12M4 9h12M4 12.500h8" stroke="#1b1b1b" strokeWidth="1.300" />
          <circle cx="19.500" cy="20" r="10" fill="#2b2b2b" stroke="#8a8a8a" /><text x="19.500" y="25" textAnchor="middle" fontFamily="Open Sans" fontSize="14" fontWeight="600" fill="#fff">1</text>
        </svg>
      </TrayItem>
      <ShowDesktop />
    </Tray>
  </Taskbar>
);

export default function App() {
  return (
    <Screen>
      <Global />
      <TitleBar>
        <AppIcon w={19} h={16} />
        <TitleText>Simulator</TitleText>
        <WindowButtons>
          <I w={12} h={12}><path d="M0 5.500h12" stroke="#000" /></I>
          <I w={12} h={12}><path d="M.5 2.500h9v9h-9ZM2.500 2.500v-2h9v9h-2" fill="none" stroke="#000" /></I>
          <I w={12} h={12}><path d="M.3.3 11.700 11.700M11.700.3.3 11.700" stroke="#000" strokeWidth="1.100" /></I>
        </WindowButtons>
      </TitleBar>
      <ToolBar>
        {GROUPS.map((g, i) => (
          <ToolGroup key={i}>{g.map((icon, j) => <ToolButton key={j}>{icon}</ToolButton>)}</ToolGroup>
        ))}
      </ToolBar>
      <Body>
        <Sidebar>
          <Group $w={199} $pad="6px 0 0 7px">
            <Legend $ls={-0.33}>Dynamic Port Circuit</Legend>
            <Row>
              <FieldLabel $w={20}>In:</FieldLabel><Field $w={29} />
              <FieldLabel $w={37} $pl={5}>Out:</FieldLabel><Field $w={29} $mr={6} />
              <Button $w={61}>Set Port</Button>
            </Row>
          </Group>
          <Group $w={200} $pad="6px 0 0 7px">
            <Legend $ls={-0.3}>Set Labels and Names</Legend>
            <Row><Field $w={74} $mr={6} /><Button $w={46} $mr={7}>Label</Button><Button $w={50}>Name</Button></Row>
          </Group>
          <Group $w={118}>
            <Legend $ls={-0.2}>Memory</Legend>
            <Row><Button $w={43} $mr={7}>Load</Button><Button $w={50}>Show</Button></Row>
          </Group>
          <Group $w={158}>
            <Legend $ls={-0.43}>Controller ASM Chart</Legend>
            <Row><Button $w={40} $mr={7}>New</Button><Button $w={36} $mr={7}>Edit</Button><Button $w={46}>Show</Button></Row>
          </Group>
          <Group $w={225} $h={132} $pad="0">
            <Legend $flush $ls={-0.55}>Controller Current State</Legend>
            <ScrollPane $h={100}><ScrollArrow /><ScrollArrow down /></ScrollPane>
          </Group>
          <Group $w={225} $h={112} $pad="0">
            <Legend $flush $ls={-0.5}>Component Name</Legend>
            <ScrollPane $h={80}><ScrollArrow /><ScrollArrow down /></ScrollPane>
          </Group>
          <Group $w={225} $h={72} $pad="0">
            <Legend $flush $ls={-0.42}>User Identification</Legend>
            <ScrollPane $h={40}><ScrollArrow small /><ScrollArrow small down /></ScrollPane>
          </Group>
        </Sidebar>
        <Canvas><Circuit /></Canvas>
        <Palette />
      </Body>
      <TaskbarView />
    </Screen>
  );
}
